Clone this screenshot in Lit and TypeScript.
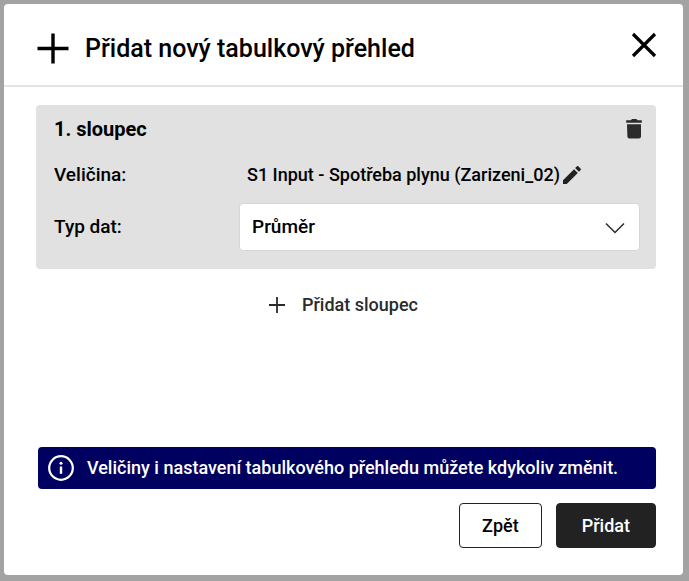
import { LitElement, html, css } from "lit";
import { customElement, state } from "lit/decorators.js";

@customElement("app-root")
export class AppRoot extends LitElement {
  static styles = css`
    :host {
      display: flex;
      box-sizing: border-box;
      min-height: 100vh;
      padding: 4px 6px 6px 4px;
      background: #a3a3a3;
      font: 500 18px/24px Roboto, sans-serif;
      color: #000;
    }
    * {
      box-sizing: border-box;
    }
    svg {
      display: block;
      flex: none;
    }
    button {
      display: inline-flex;
      align-items: center;
      justify-content: center;
      margin: 0;
      padding: 0;
      border: 0;
      background: none;
      font: inherit;
      color: inherit;
      cursor: pointer;
    }
    .dialog {
      flex: 1;
      display: flex;
      flex-direction: column;
      background: #fff;
      border-radius: 4px;
    }
    .header {
      display: flex;
      align-items: center;
      gap: 16px;
      height: 83px;
      padding: 8px 26px 0 33px;
      border-bottom: 2px solid #e4e4e4;
    }
    .title {
      flex: 1;
      margin: 0;
      font-size: 25px;
      line-height: 32px;
      font-weight: 500;
    }
    .close {
      margin-bottom: 8px;
    }
    .body {
      flex: 1;
      display: flex;
      flex-direction: column;
      padding: 18px 27px 27px 32px;
    }
    .card {
      padding: 12px 16px 18px 18px;
      background: #e1e1e1;
      border-radius: 4px;
    }
    .card-head {
      display: flex;
      align-items: center;
      justify-content: space-between;
    }
    .card-title {
      margin: 0;
      font-size: 20px;
      line-height: 24px;
      font-weight: 700;
    }
    .trash {
      margin-right: -6px;
    }
    .fields {
      display: grid;
      grid-template-columns: 185px 1fr;
      align-items: center;
      row-gap: 16px;
      margin-top: 22px;
    }
    .label {
      font-size: 19px;
    }
    .value {
      display: flex;
      align-items: center;
      padding-left: 8px;
    }
    .select {
      display: grid;
      align-items: center;
    }
    .select > * {
      grid-area: 1 / 1;
    }
    .select select {
      appearance: none;
      width: 100%;
      height: 48px;
      padding: 0 48px 0 12px;
      border: 1px solid #d6d6d6;
      border-radius: 4px;
      background: #fff;
      font: inherit;
      font-size: 19px;
      color: inherit;
    }
    .select svg {
      justify-self: end;
      margin: 2px 14px 0 0;
      pointer-events: none;
    }
    .add {
      align-self: center;
      gap: 16px;
      margin-top: 24px;
      padding-right: 6px;
      color: #2b2b2b;
    }
    .info {
      display: flex;
      align-items: center;
      gap: 11px;
      margin: auto 0 0 2px;
      padding: 6px 8px;
      min-height: 42px;
      background: #000060;
      border-radius: 4px;
      color: #fff;
    }
    .actions {
      display: flex;
      justify-content: flex-end;
      gap: 14px;
      margin-top: 14px;
    }
    .actions button {
      height: 45px;
      padding: 0 22px;
      border: 1px solid #222;
      border-radius: 4px;
    }
    .actions .primary {
      padding: 0 25px;
      background: #222;
      color: #fff;
    }
  `;

  @state() private kind = "Průměr";

  render() {
    return html`
      <main class="dialog" role="dialog" aria-labelledby="title">
        <header class="header">
          <svg width="32" height="32" viewBox="0 0 32 32" aria-hidden="true">
            <path d="M.5 15.5H31.5M16 .5V30.5" stroke="#000" stroke-width="3.4" />
          </svg>
          <h1 class="title" id="title">Přidat nový tabulkový přehled</h1>
          <button class="close" aria-label="Zavřít">
            <svg width="26" height="26" viewBox="0 0 26 26">
              <path d="M2 2L24 24M24 2L2 24" stroke="#000" stroke-width="3.2" />
            </svg>
          </button>
        </header>
        <div class="body">
          <section class="card">
            <div class="card-head">
              <h2 class="card-title">1. sloupec</h2>
              <button class="trash" aria-label="Odstranit sloupec">
                <svg width="24" height="24" viewBox="0 0 24 24" fill="#2b2b2b">
                  <path d="M5 7.2h14V19.4q0 2-2 2H7.4q-2 0-2-2zM4.2 3.2h4.6L10 2.1h4.4l1.2 1.1h4.2v2.6H4.2z" />
                </svg>
              </button>
            </div>
            <div class="fields">
              <span class="label">Veličina:</span>
              <div class="value">
                <span>S1 Input - Spotřeba plynu (Zarizeni_02)</span>
                <button aria-label="Upravit veličinu">
                  <svg width="24" height="24" viewBox="0 0 24 24" fill="#222">
                    <path d="M3 17.25V21h3.75L17.81 9.94l-3.75-3.75L3 17.25zM20.71 7.04c.39-.39.39-1.02 0-1.41l-2.34-2.34a.996.996 0 0 0-1.41 0l-1.83 1.83 3.75 3.75 1.83-1.83z" />
                  </svg>
                </button>
              </div>
              <label class="label" for="kind">Typ dat:</label>
              <div class="select">
                <select id="kind" .value=${this.kind} @change=${(e: Event) => (this.kind = (e.target as HTMLSelectElement).value)}>
                  <option>Průměr</option>
                </select>
                <svg width="22" height="12" viewBox="0 0 22 12" aria-hidden="true">
                  <path d="M2 1.5L11 10.5L20 1.5" fill="none" stroke="#2b2b2b" stroke-width="1.5" />
                </svg>
              </div>
            </div>
          </section>
          <button class="add">
            <svg width="18" height="18" viewBox="0 0 18 18" aria-hidden="true">
              <path d="M1 9H17M9 1V17" stroke="#2b2b2b" stroke-width="1.8" />
            </svg>
            Přidat sloupec
          </button>
          <p class="info">
            <svg width="30" height="30" viewBox="0 0 30 30" aria-hidden="true">
              <circle cx="15" cy="15" r="11.8" fill="none" stroke="#fff" stroke-width="2.2" />
              <path d="M15 13.5V20.8" stroke="#fff" stroke-width="2.4" />
              <circle cx="15" cy="10.2" r="1.5" fill="#fff" />
            </svg>
            Veličiny i nastavení tabulkového přehledu můžete kdykoliv změnit.
          </p>
          <div class="actions">
            <button>Zpět</button>
            <button class="primary">Přidat</button>
          </div>
        </div>
      </main>
    `;
  }
}
